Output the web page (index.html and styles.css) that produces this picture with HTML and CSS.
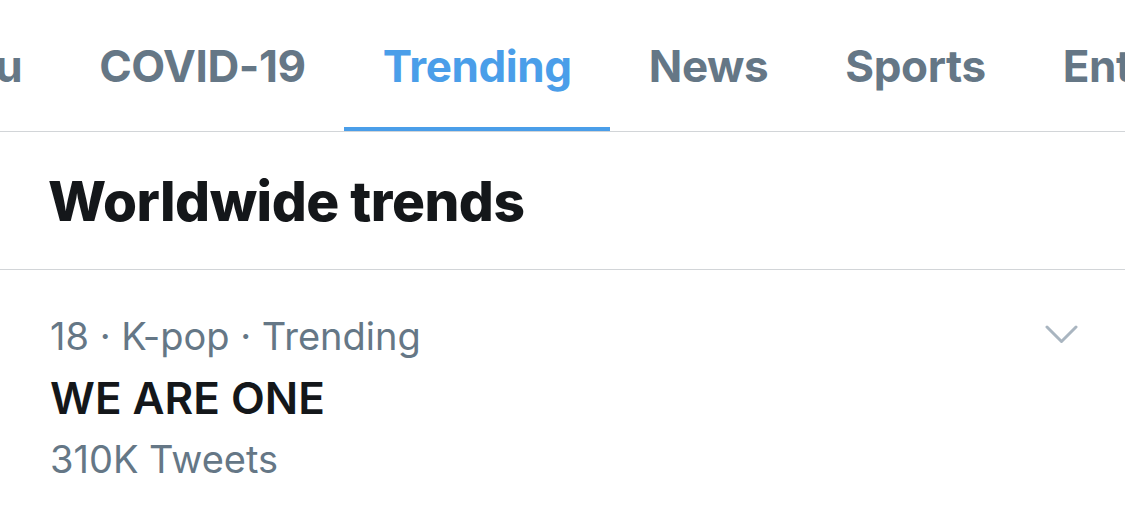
FILE: index.html
```html
<!DOCTYPE html>
<html>
<head>
<meta charset="utf-8">
<link rel="stylesheet" href="styles.css">
</head>
<body>
<div class="page">
  <nav class="tabs">
    <div class="tab-track">
      <div class="tab">For you</div>
      <div class="tab">COVID-19</div>
      <div class="tab active">Trending</div>
      <div class="tab">News</div>
      <div class="tab">Sports</div>
      <div class="tab">Entertainment</div>
    </div>
  </nav>
  <header class="section-head">
    <h1>Worldwide trends</h1>
  </header>
  <article class="trend">
    <div class="trend-body">
      <div class="meta">18 · K-pop · Trending</div>
      <div class="name">WE ARE ONE</div>
      <div class="count">310K Tweets</div>
    </div>
    <svg class="chev" viewBox="0 0 33 20" width="33" height="20">
      <path d="M2 2 L16.5 16.5 L31 2" fill="none" stroke="#a9b5c0" stroke-width="3" stroke-linecap="round" stroke-linejoin="round"/>
    </svg>
  </article>
</div>
</body>
</html>
```
FILE: styles.css
```css
html, body {
  margin: 0;
  padding: 0;
  background: #ffffff;
}
.page {
  width: 1125px;
  height: 526px;
  overflow: hidden;
  font-family: Inter, "Liberation Sans", sans-serif;
}
.tabs {
  height: 131px;
  border-bottom: 1px solid #d2d5d8;
  overflow: hidden;
}
.tab-track {
  display: flex;
  margin-left: -174px;
  height: 100%;
}
.tab {
  flex: none;
  padding: 4px 38px 0 39px;
  height: 100%;
  box-sizing: border-box;
  display: flex;
  align-items: center;
  font-size: 44px;
  font-weight: 700;
  letter-spacing: -0.4px;
  color: #657786;
  border-bottom: 4px solid transparent;
}
.tab.active {
  color: #4a9ee9;
  border-bottom-color: #4a9ee9;
}
.section-head {
  height: 137px;
  border-bottom: 1px solid #d2d5d8;
  display: flex;
  align-items: center;
  padding-left: 48px;
}
.section-head h1 {
  margin: 0;
  font-size: 55px;
  font-weight: 800;
  color: #14171a;
  letter-spacing: -0.5px;
}
.trend {
  display: flex;
  justify-content: space-between;
  align-items: flex-start;
  padding: 40px 47px 0 50px;
}
.meta {
  font-size: 38px;
  color: #657786;
  line-height: 52px;
}
.name {
  font-size: 44px;
  font-weight: 600;
  color: #14171a;
  line-height: 72px;
}
.count {
  font-size: 38px;
  color: #657786;
  line-height: 50px;
}
.chev {
  margin-top: 15px;
}
```
